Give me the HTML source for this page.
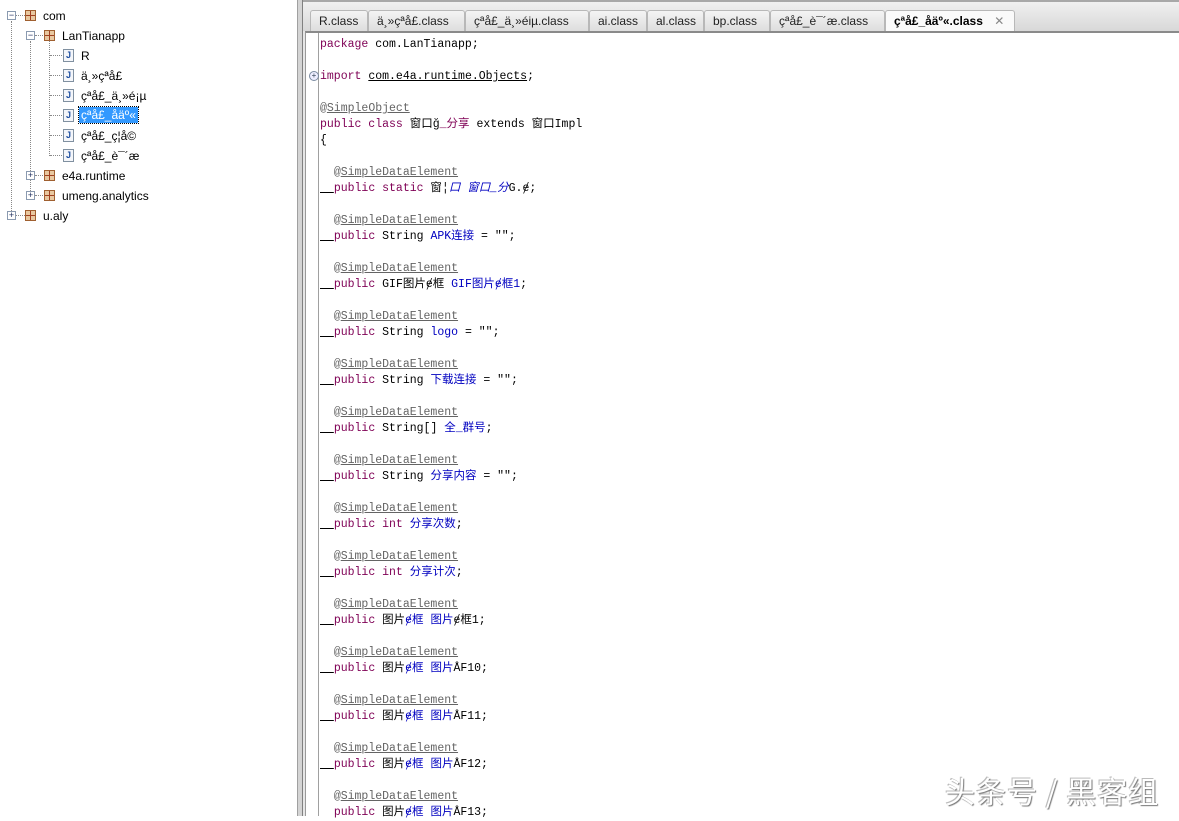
<!DOCTYPE html><html><head><meta charset="utf-8"><style>
body{margin:0;width:1179px;height:816px;overflow:hidden;background:#fff;position:relative;font-family:"Liberation Sans","Noto Sans CJK SC",sans-serif}
#left{position:absolute;left:0;top:0;width:297px;height:816px;background:#fff;border-right:1px solid #a0a0a0}
#split{position:absolute;left:298px;top:0;width:4px;height:816px;background:#d4d4d4;border-right:1px solid #808080}
#right{position:absolute;left:303px;top:0;right:0;height:816px;background:#e6e6e6}
.tabs{position:absolute;left:0;top:0;right:0;height:31px;background:linear-gradient(#f0f0f0,#d8d8d8);border-top:2px solid #a8a8a8;box-sizing:border-box}
.tab{position:absolute;top:8px;height:22px;border:1px solid #b8b8b8;border-bottom:none;border-radius:3px 3px 0 0;background:linear-gradient(#f4f4f4,#dcdcdc);font-size:12px;line-height:21px;color:#222;box-sizing:border-box;padding-left:8px}
.tab.act{background:#fafafa;font-weight:bold;color:#000}
#ed{position:absolute;left:2px;top:31px;right:0;bottom:0;background:#fff;border-top:2px solid #8a8a8a;border-left:1px solid #9a9a9a}
#gut{position:absolute;left:12px;top:0;bottom:0;border-left:1px solid #a0a0a0}
.l{position:absolute;left:14px;font-family:"Liberation Mono","Noto Sans CJK SC",monospace;font-size:11.5px;white-space:pre;color:#000;line-height:16px}
.k{color:#7f0055}.a{color:#646464}.u{text-decoration:underline}.b{color:#0000c0}.i{font-style:italic}
.tree{position:absolute;font-size:12px;color:#000;white-space:nowrap}
.pk{position:absolute;width:11px;height:11px;background:#e8c8a0;border:1px solid #a06030;box-sizing:border-box}
.pk:before{content:"";position:absolute;left:4px;top:0;width:1px;height:9px;background:#a04020}
.pk:after{content:"";position:absolute;top:4px;left:0;height:1px;width:9px;background:#a04020}
.ex{position:absolute;width:9px;height:9px;border:1px solid #8a9ab0;background:#fff;box-sizing:border-box;font-size:9px;line-height:7px;text-align:center;color:#203060}
.jf{position:absolute;width:11px;height:13px;border:1px solid #8090a0;background:#f4f6fa;box-sizing:border-box;font-size:9px;font-weight:bold;color:#2050a0;text-align:center;line-height:11px}
.dh{position:absolute;border-top:1px dotted #888;height:0}
.dv{position:absolute;border-left:1px dotted #888;width:0}
.wm{position:absolute;left:945px;top:768px;font-size:30px;color:#fff;text-shadow:1px 1px 1px #777,-1px -1px 0 #bbb;font-family:"Noto Sans CJK SC",sans-serif;letter-spacing:1px}
</style></head><body>
<div id="left">
<div class="dv" style="left:11px;top:21px;height:194px"></div>
<div class="dv" style="left:30px;top:41px;height:154px"></div>
<div class="dv" style="left:49px;top:41px;height:115px"></div>
<div class="ex" style="left:7px;top:11px">−</div><div class="dh" style="left:16px;top:15px;width:9px"></div><div class="pk" style="left:25px;top:10px"></div><div class="tree" style="left:43px;top:9px">com</div>
<div class="ex" style="left:26px;top:31px">−</div><div class="dh" style="left:35px;top:35px;width:8px"></div><div class="pk" style="left:44px;top:30px"></div><div class="tree" style="left:62px;top:29px">LanTianapp</div>
<div class="dh" style="left:50px;top:55px;width:12px"></div><div class="jf" style="left:63px;top:49px">J</div><div class="tree" style="left:81px;top:49px">R</div>
<div class="dh" style="left:50px;top:75px;width:12px"></div><div class="jf" style="left:63px;top:69px">J</div><div class="tree" style="left:81px;top:69px">ä¸»çªå£</div>
<div class="dh" style="left:50px;top:95px;width:12px"></div><div class="jf" style="left:63px;top:89px">J</div><div class="tree" style="left:81px;top:89px">çªå£_ä¸»é¡µ</div>
<div class="dh" style="left:50px;top:115px;width:12px"></div><div class="jf" style="left:63px;top:109px">J</div><div class="tree" style="left:79px;top:107px;background:#3399ff;color:#fff;padding:1px 2px;outline:1px dotted #000">çªå£_åäº«</div>
<div class="dh" style="left:50px;top:135px;width:12px"></div><div class="jf" style="left:63px;top:129px">J</div><div class="tree" style="left:81px;top:129px">çªå£_ç¦å©</div>
<div class="dh" style="left:50px;top:155px;width:12px"></div><div class="jf" style="left:63px;top:149px">J</div><div class="tree" style="left:81px;top:149px">çªå£_è¯´æ</div>
<div class="ex" style="left:26px;top:171px">+</div><div class="dh" style="left:35px;top:175px;width:8px"></div><div class="pk" style="left:44px;top:170px"></div><div class="tree" style="left:62px;top:169px">e4a.runtime</div>
<div class="ex" style="left:26px;top:191px">+</div><div class="dh" style="left:35px;top:195px;width:8px"></div><div class="pk" style="left:44px;top:190px"></div><div class="tree" style="left:62px;top:189px">umeng.analytics</div>
<div class="ex" style="left:7px;top:211px">+</div><div class="dh" style="left:16px;top:215px;width:9px"></div><div class="pk" style="left:25px;top:210px"></div><div class="tree" style="left:43px;top:209px">u.aly</div>
</div>
<div id="split"></div>
<div id="right">
<div class="tabs">
<div class="tab" style="left:7px;width:58px">R.class</div>
<div class="tab" style="left:65px;width:97px">ä¸»çªå£.class</div>
<div class="tab" style="left:162px;width:124px">çªå£_ä¸»éiµ.class</div>
<div class="tab" style="left:286px;width:58px">ai.class</div>
<div class="tab" style="left:344px;width:57px">al.class</div>
<div class="tab" style="left:401px;width:66px">bp.class</div>
<div class="tab" style="left:467px;width:115px">çªå£_è¯´æ.class</div>
<div class="tab act" style="left:582px;width:130px">çªå£_åäº«.class <span style="font-weight:normal;color:#888;margin-left:8px">✕</span></div>
</div>
<div id="ed"><div id="gut"></div>
<div style="position:absolute;left:3px;top:38px;width:8px;height:8px;border:1px solid #7a8aa0;border-radius:50%;font-size:8px;line-height:8px;text-align:center;color:#345;background:#eef">+</div>
<div class="l" style="top:4px"><span class="k">package</span> com.LanTianapp;</div>
<div class="l" style="top:36px"><span class="k">import</span> <span class="u">com.e4a.runtime.Objects</span>;</div>
<div class="l" style="top:68px"><span class="a">@<span class="u">SimpleObject</span></span></div>
<div class="l" style="top:84px"><span class="k">public class</span> 窗口ğ<span class="k">_分享</span> extends 窗口Impl</div>
<div class="l" style="top:100px">{</div>
<div class="l" style="top:132px">  <span class="a">@<span class="u">SimpleDataElement</span></span></div>
<div class="l" style="top:148px"><span class="u">  </span><span class="k">public static</span> 窗¦<span class="b i">口 窗口_分</span>G.ɇ;</div>
<div class="l" style="top:180px">  <span class="a">@<span class="u">SimpleDataElement</span></span></div>
<div class="l" style="top:196px"><span class="u">  </span><span class="k">public</span> String <span class="b">APK连接</span> = "";</div>
<div class="l" style="top:228px">  <span class="a">@<span class="u">SimpleDataElement</span></span></div>
<div class="l" style="top:244px"><span class="u">  </span><span class="k">public</span> GIF图片ɇ框 <span class="b">GIF图片ɇ框1</span>;</div>
<div class="l" style="top:276px">  <span class="a">@<span class="u">SimpleDataElement</span></span></div>
<div class="l" style="top:292px"><span class="u">  </span><span class="k">public</span> String <span class="b">logo</span> = "";</div>
<div class="l" style="top:324px">  <span class="a">@<span class="u">SimpleDataElement</span></span></div>
<div class="l" style="top:340px"><span class="u">  </span><span class="k">public</span> String <span class="b">下载连接</span> = "";</div>
<div class="l" style="top:372px">  <span class="a">@<span class="u">SimpleDataElement</span></span></div>
<div class="l" style="top:388px"><span class="u">  </span><span class="k">public</span> String[] <span class="b">全_群号</span>;</div>
<div class="l" style="top:420px">  <span class="a">@<span class="u">SimpleDataElement</span></span></div>
<div class="l" style="top:436px"><span class="u">  </span><span class="k">public</span> String <span class="b">分享内容</span> = "";</div>
<div class="l" style="top:468px">  <span class="a">@<span class="u">SimpleDataElement</span></span></div>
<div class="l" style="top:484px"><span class="u">  </span><span class="k">public int</span> <span class="b">分享次数</span>;</div>
<div class="l" style="top:516px">  <span class="a">@<span class="u">SimpleDataElement</span></span></div>
<div class="l" style="top:532px"><span class="u">  </span><span class="k">public int</span> <span class="b">分享计次</span>;</div>
<div class="l" style="top:564px">  <span class="a">@<span class="u">SimpleDataElement</span></span></div>
<div class="l" style="top:580px"><span class="u">  </span><span class="k">public</span> 图片<span class="b">ɇ框</span> <span class="b">图片</span>ɇ框1;</div>
<div class="l" style="top:612px">  <span class="a">@<span class="u">SimpleDataElement</span></span></div>
<div class="l" style="top:628px"><span class="u">  </span><span class="k">public</span> 图片<span class="b">ɇ框</span> <span class="b">图片</span>ÅF10;</div>
<div class="l" style="top:660px">  <span class="a">@<span class="u">SimpleDataElement</span></span></div>
<div class="l" style="top:676px"><span class="u">  </span><span class="k">public</span> 图片<span class="b">ɇ框</span> <span class="b">图片</span>ÅF11;</div>
<div class="l" style="top:708px">  <span class="a">@<span class="u">SimpleDataElement</span></span></div>
<div class="l" style="top:724px"><span class="u">  </span><span class="k">public</span> 图片<span class="b">ɇ框</span> <span class="b">图片</span>ÅF12;</div>
<div class="l" style="top:756px">  <span class="a">@<span class="u">SimpleDataElement</span></span></div>
<div class="l" style="top:772px">  <span class="k">public</span> 图片<span class="b">ɇ框</span> <span class="b">图片</span>ÅF13;</div>
</div>
</div>
<div class="wm">头条号 / 黑客组</div>
</body></html>
